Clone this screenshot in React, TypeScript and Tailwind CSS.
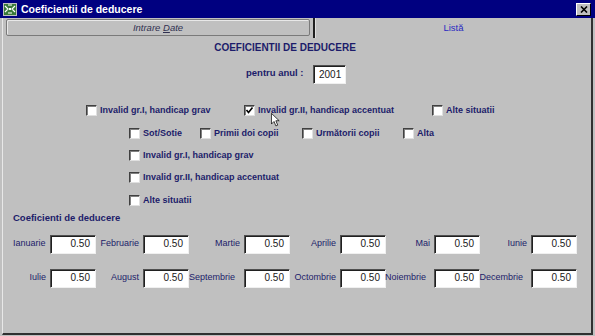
import React from 'react';

const font = { fontFamily: '"Liberation Sans", Arial, sans-serif' };

const Checkbox = ({ checked = false }: { checked?: boolean }) => (
  <span className="relative inline-block w-[11px] h-[11px] shrink-0 bg-white border-t border-l border-t-[#404040] border-l-[#404040] border-b border-r border-b-[#e0e0e0] border-r-[#e0e0e0] shadow-[inset_1px_1px_0_#808080]">
    {checked && (
      <svg viewBox="0 0 9 9" className="absolute left-[0px] top-[0px] w-[9px] h-[9px]">
        <path d="M1.5 4 L3.5 6.5 L7.5 1.5" stroke="#000" strokeWidth="1.6" fill="none" />
      </svg>
    )}
  </span>
);

const Check = ({ label, checked, w }: { label: string; checked?: boolean; w?: string }) => (
  <div className={`flex items-center gap-[3px] ${w ?? ''}`}>
    <Checkbox checked={checked} />
    <span className="text-[9px] font-bold text-[#1c1c6a] whitespace-nowrap leading-none">{label}</span>
  </div>
);

const Field = ({ value, w = 'w-[46px]', align = 'text-right' }: { value: string; w?: string; align?: string }) => (
  <div className={`${w} h-[19px] shrink-0 bg-white border-t border-l border-t-[#505050] border-l-[#505050] border-b border-r border-b-[#f0f0f0] border-r-[#f0f0f0] shadow-[inset_1px_1px_0_#202020] flex items-center px-[5px] ${align}`}>
    <span className={`w-full text-[10px] text-[#202020] leading-none ${align}`}>{value}</span>
  </div>
);

type Month = { m: string; w: string; left?: boolean; gap?: string };

const row1: Month[] = [
  { m: 'Ianuarie', w: 'w-[88px]', left: true },
  { m: 'Februarie', w: 'w-[93px]' },
  { m: 'Martie', w: 'w-[101px]' },
  { m: 'Aprilie', w: 'w-[96px]' },
  { m: 'Mai', w: 'w-[94px]' },
  { m: 'Iunie', w: 'w-[97px]' },
];
const row2: Month[] = [
  { m: 'Iulie', w: 'w-[88px]' },
  { m: 'August', w: 'w-[93px]' },
  { m: 'Septembrie', w: 'w-[101px]', gap: 'gap-[9px]' },
  { m: 'Octombrie', w: 'w-[96px]' },
  { m: 'Noiembrie', w: 'w-[94px]', gap: 'gap-[8px]' },
  { m: 'Decembrie', w: 'w-[97px]', gap: 'gap-[8px]' },
];

const MonthRow = ({ items }: { items: Month[] }) => (
  <div className="flex pl-[5px]">
    {items.map((it) => (
      <div key={it.m} className={`${it.w} flex items-start ${it.left ? 'justify-between' : 'justify-end'} ${it.gap ?? 'gap-[4px]'}`}>
        <span className={`text-[9px] text-[#1c1c6a] leading-none pt-[4px] whitespace-nowrap ${it.left ? 'pl-[5px]' : ''}`}>{it.m}</span>
        <Field value="0.50" />
      </div>
    ))}
  </div>
);

export default function App() {
  return (
    <div className="relative w-[595px] h-[336px] bg-[#c0c0c0] flex flex-col overflow-hidden" style={font}>
      {/* Title bar */}
      <div className="h-[18px] bg-[#000080] flex items-center pl-[3px] pr-[4px] shrink-0">
        <svg viewBox="0 0 14 13" className="w-[14px] h-[13px]">
          <rect x="0" y="0" width="14" height="13" fill="#c0c0c0" />
          <rect x="1" y="1" width="12" height="11" fill="#3a7a3a" />
          <path d="M2 3 L5 6 L2 9 M12 3 L9 6 L12 9 M5 2 L9 2 M5 10 L9 10" stroke="#fff" strokeWidth="1.2" fill="none" />
          <rect x="6" y="5" width="2" height="2" fill="#fff" />
        </svg>
        <span className="ml-[4px] text-white font-bold text-[10.5px] leading-none">Coeficientii de deducere</span>
        <div className="ml-auto w-[15px] h-[13px] bg-[#c0c0c0] border border-t-white border-l-white border-b-black border-r-black flex items-center justify-center">
          <svg viewBox="0 0 8 7" className="w-[8px] h-[7px]">
            <path d="M1 0.5 L7 6.5 M7 0.5 L1 6.5" stroke="#000" strokeWidth="1.6" />
          </svg>
        </div>
      </div>

      {/* Body */}
      <div className="flex-1 flex flex-col pl-[2px] pr-[2px] pb-[1px]">
        <div className="flex-1 flex flex-col border-l border-l-[#e8e8e8] border-r-2 border-r-[#303030] border-b-2 border-b-[#303030]">
          {/* Tabs */}
          <div className="flex h-[20px] shrink-0">
            <div className="ml-[3px] mt-[1px] w-[304px] h-[17px] rounded-[2px] border border-[#7a7a7a] shadow-[inset_1px_1px_0_#e8e8e8] flex items-center justify-center">
              <span className="text-[9.5px] italic text-[#303050] leading-none">
                Intrare <span className="underline">D</span>ate
              </span>
            </div>
            <div className="ml-[3px] w-[2px] h-[20px] bg-[#202020]" />
            <div className="flex-1 border-l border-l-[#e0e0e0] flex items-center justify-center">
              <span className="text-[9.5px] text-[#2a2ac0] leading-none">Listă</span>
            </div>
          </div>

          {/* Heading */}
          <div className="mt-[5px] pr-[24px] text-center text-[10px] font-bold text-[#1c1c6a] leading-none">COEFICIENTII DE DEDUCERE</div>

          <div className="mt-[12px] flex items-start pl-[243px]">
            <span className="text-[9.5px] font-bold text-[#1c1c6a] leading-none pt-[3px] w-[67px]">pentru anul :</span>
            <Field value="2001" w="w-[33px]" align="text-left" />
          </div>

          {/* Checkboxes */}
          <div className="mt-[21px] flex items-center pl-[83px]">
            <Check label="Invalid gr.I, handicap grav" w="w-[158px]" />
            <Check label="Invalid gr.II, handicap accentuat" checked w="w-[188px]" />
            <Check label="Alte situatii" />
          </div>
          <div className="mt-[12px] flex items-center pl-[126px]">
            <Check label="Sot/Sotie" w="w-[71px]" />
            <Check label="Primii doi copii" w="w-[102px]" />
            <Check label="Următorii copii" w="w-[101px]" />
            <Check label="Alta" />
          </div>
          <div className="mt-[11px] pl-[126px]">
            <Check label="Invalid gr.I, handicap grav" />
          </div>
          <div className="mt-[11px] pl-[126px]">
            <Check label="Invalid gr.II, handicap accentuat" />
          </div>
          <div className="mt-[12px] pl-[126px]">
            <Check label="Alte situatii" />
          </div>

          <div className="mt-[7px] pl-[10px] text-[9.5px] font-bold text-[#1c1c6a] leading-none">Coeficienti de deducere</div>

          <div className="mt-[12px] flex flex-col gap-[15px]">
            <MonthRow items={row1} />
            <MonthRow items={row2} />
          </div>
        </div>
      </div>

      {/* Mouse pointer */}
      <svg viewBox="0 0 12 19" className="absolute left-[271px] top-[113px] w-[9px] h-[14px]">
        <path d="M0.5 0.5 L0.5 15 L4 11.5 L6.5 17.5 L9 16.5 L6.5 10.5 L11 10.5 Z" fill="#fff" stroke="#000" strokeWidth="1" />
      </svg>
    </div>
  );
}
